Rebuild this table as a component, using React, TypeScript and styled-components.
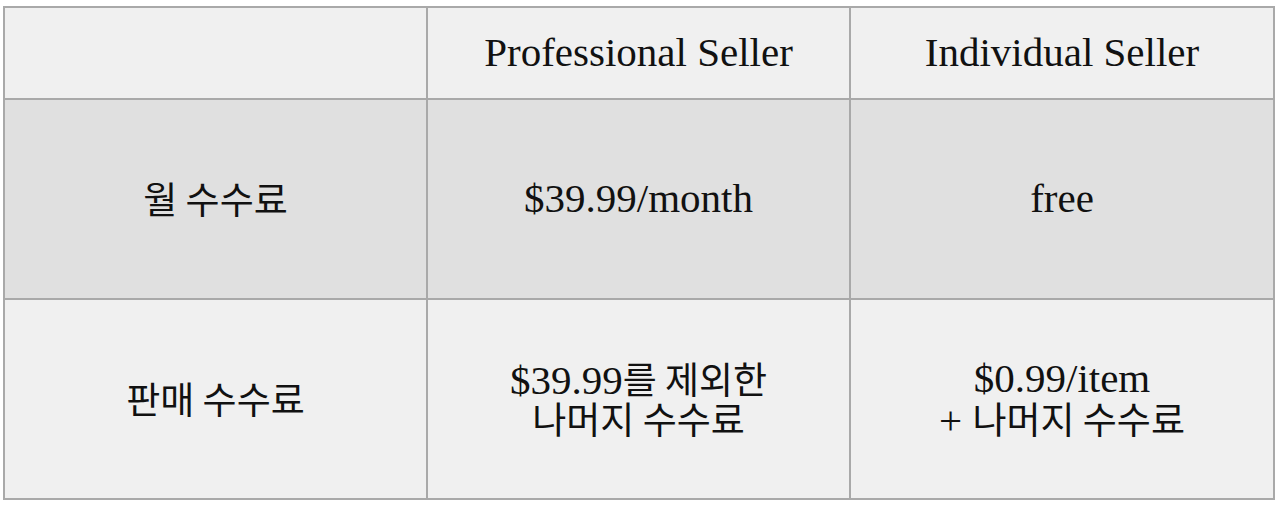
import React from "react";
import styled, { createGlobalStyle } from "styled-components";

const Global = createGlobalStyle`
  html, body { margin: 0; padding: 0; background: #ffffff; }
  body { font-family: "Liberation Serif", "Noto Sans CJK KR", serif; }
`;

const Page = styled.div`
  padding: 6px 0 0 3px;
`;

const Grid = styled.div`
  display: grid;
  grid-template-columns: 421px 421px 422px;
  grid-template-rows: 90px 198px 198px;
  gap: 2px;
  padding: 2px;
  width: 1268px;
  background: #a9a9a9;
  color: #111;
  font-family: "Liberation Serif", "Noto Sans CJK KR", serif;
  font-size: 41px;
  line-height: 40px;
`;

const Cell = styled.div<{ $shade?: boolean }>`
  display: flex;
  flex-direction: column;
  align-items: center;
  justify-content: center;
  text-align: center;
  background: ${(p) => (p.$shade ? "#e0e0e0" : "#f0f0f0")};
  padding-bottom: 3px;
`;

const Ko = styled.span`
  display: inline-block;
  font-family: "Noto Sans CJK KR", sans-serif;
  font-size: 37px;
  line-height: 40px;
  height: 40px;
  overflow: visible;
`;

const Line = styled.div`
  height: 40px;
  white-space: nowrap;
`;

export default function App() {
  return (
    <>
      <Global />
      <Page>
        <Grid>
          <Cell />
          <Cell>Professional Seller</Cell>
          <Cell>Individual Seller</Cell>

          <Cell $shade>
            <Ko>월 수수료</Ko>
          </Cell>
          <Cell $shade>$39.99/month</Cell>
          <Cell $shade>free</Cell>

          <Cell>
            <Ko>판매 수수료</Ko>
          </Cell>
          <Cell>
            <Line>
              $39.99<Ko>를 제외한</Ko>
            </Line>
            <Line>
              <Ko>나머지 수수료</Ko>
            </Line>
          </Cell>
          <Cell>
            <Line>$0.99/item</Line>
            <Line>
              + <Ko>나머지 수수료</Ko>
            </Line>
          </Cell>
        </Grid>
      </Page>
    </>
  );
}
